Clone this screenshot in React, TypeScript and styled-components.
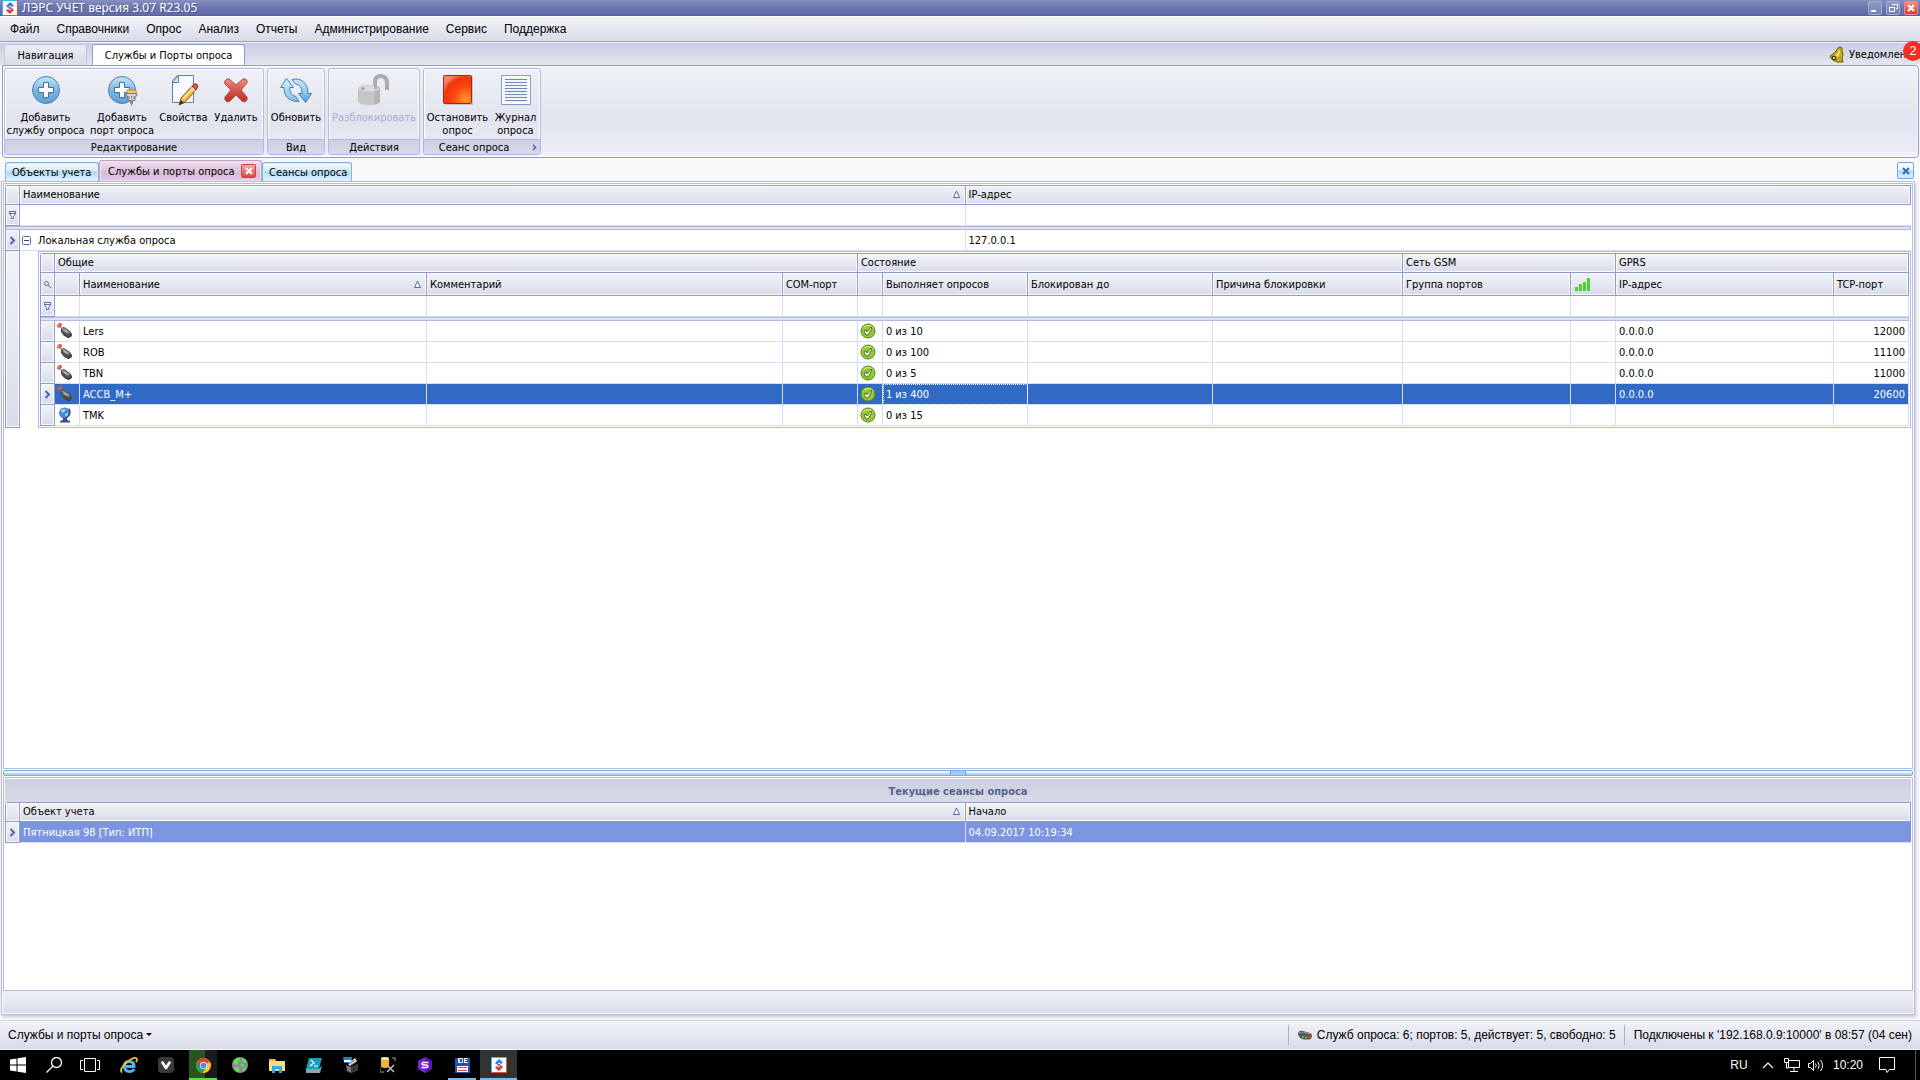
import React from 'react';
import styled, { createGlobalStyle, css } from 'styled-components';

const UI = `"DejaVu Sans Condensed", "Noto Sans", Tahoma, sans-serif`;
const SHELL = `"Liberation Sans", Arial, sans-serif`;
const CAPTION = `"Noto Sans", "Open Sans", "Segoe UI", sans-serif`;

const line = '#8f9ac8';
const softLine = '#b3bade';
const cellLine = '#d9daf5';
const barFill = 'linear-gradient(#f1f2f7, #e6e8f1 50%, #d8dbe9)';

const Global = createGlobalStyle`
  *, *::before, *::after { box-sizing: border-box; }
  body { margin: 0; background: #000; }
  button, input { font: inherit; color: inherit; border: 0; padding: 0; margin: 0; background: none; border-radius: 0; outline: none; }
  svg { display: block; flex: none; }
`;

const Page = styled.div`
  min-height: 100vh;
  display: flex;
  flex-direction: column;
  background: #f8f8fb;
  font: 11px/13px ${UI};
  color: #000;
  white-space: nowrap;
  overflow: hidden;
`;

/* ---------- window chrome ---------- */

const TitleBar = styled.header`
  height: 16px;
  flex: none;
  display: flex;
  align-items: center;
  gap: 4px;
  padding: 0 2px 0 2px;
  background: linear-gradient(#8690bf, #6a75ad 50%, #636ea8 90%, #4e5a97);
  color: #fff;
  font: 12px/14px ${CAPTION};
`;

const TitleText = styled.h1`
  flex: 1;
  margin: 0;
  font: inherit;
  text-shadow: 1px 1px 0 #4d5890;
`;

const WindowButton = styled.button<{ $close?: boolean }>`
  width: 14px;
  height: 14px;
  display: grid;
  place-items: center;
  border: 1px solid ${p => (p.$close ? '#e88' : '#a3abd3')};
  border-radius: 2px;
  background: ${p => (p.$close ? 'linear-gradient(#f08a86, #dd3a36)' : 'linear-gradient(#929ac5, #7480b5)')};
`;

const MenuBar = styled.nav`
  height: 26px;
  flex: none;
  display: flex;
  align-items: center;
  gap: 17px;
  padding: 0 10px;
  border-top: 1px solid #fff;
  border-bottom: 1px solid ${line};
  background: ${barFill};
  font: 12px/16px ${SHELL};
`;

const MenuItem = styled.button`
  line-height: 16px;
`;

/* ---------- ribbon ---------- */

const RibbonTabs = styled.div`
  height: 23px;
  flex: none;
  display: flex;
  align-items: flex-end;
  gap: 5px;
  padding: 0 0 0 4px;
  background: linear-gradient(#c9cde0, #d9dce9 60%, #e3e5ef);
  border-top: 1px solid #f4f5fa;
`;

const RibbonTab = styled.button<{ $active?: boolean; $width: number }>`
  width: ${p => p.$width}px;
  height: 21px;
  border: 1px solid ${p => (p.$active ? line : '#c2c7de')};
  border-bottom: 0;
  border-radius: 3px 3px 0 0;
  background: ${p => (p.$active ? '#fff' : 'linear-gradient(#eceef5, #d9dce9)')};
`;

const Notice = styled.button`
  position: relative;
  height: 22px;
  width: 91px;
  margin-left: auto;
  display: flex;
  align-items: center;
  gap: 5px;
  overflow: visible;
`;

const Badge = styled.span`
  position: absolute;
  right: -3px;
  top: -2px;
  width: 20px;
  height: 20px;
  border-radius: 50%;
  background: #fb2d25;
  color: #fff;
  font: 12px/20px ${SHELL};
  text-align: center;
`;

const Ribbon = styled.section`
  height: 93px;
  flex: none;
  display: flex;
  gap: 3px;
  margin: 0 1px 0 2px;
  padding: 2px 1px;
  border: 1px solid ${line};
  border-radius: 0 4px 4px 4px;
  box-shadow: inset 0 0 0 1px #fff;
  background: linear-gradient(#f0f1f6, #e1e4ee 60%, #e9eaf4 90%, #f2f2fa);
`;

const Group = styled.section`
  display: flex;
  flex-direction: column;
  border: 1px solid ${softLine};
  border-radius: 3px;
  overflow: hidden;
  box-shadow: inset 0 0 0 1px #fff;
`;

const GroupBody = styled.div`
  flex: 1;
  display: flex;
`;

const GroupCaption = styled.h2<{ $arrow?: boolean }>`
  position: relative;
  height: 15px;
  margin: 0;
  padding-right: ${p => (p.$arrow ? 16 : 0)}px;
  border-top: 1px solid ${softLine};
  background: linear-gradient(#ccd0e2, #d6d9e8);
  font: 11px/15px ${UI};
  text-align: center;
`;

const CaptionArrow = styled.span`
  position: absolute;
  right: 3px;
  top: 4px;
`;

const Tool = styled.button<{ $width: number }>`
  width: ${p => p.$width}px;
  padding-top: 5px;
  display: flex;
  flex-direction: column;
  align-items: center;
  gap: 5px;
  line-height: 13px;
  white-space: pre;
  &:disabled { color: #a9aed6; }
`;

/* ---------- document area ---------- */

const DocTabs = styled.div`
  height: 23px;
  flex: none;
  display: flex;
  align-items: flex-end;
  padding: 0 6px 0 5px;
`;

const DocTab = styled.div<{ $active?: boolean; $width: number }>`
  width: ${p => p.$width}px;
  height: ${p => (p.$active ? 21 : 19)}px;
  display: flex;
  align-items: center;
  justify-content: space-between;
  padding: 0 5px 0 ${p => (p.$active ? 8 : 6)}px;
  border: 1px solid ${p => (p.$active ? '#c79fc4' : '#7fb2dc')};
  border-bottom: 0;
  border-radius: 3px 3px 0 0;
  box-shadow: inset 0 0 0 1px ${p => (p.$active ? '#f2e2f1' : '#d9eefb')};
  background: ${p => (p.$active ? 'linear-gradient(#f1e2f0, #d9bcd7 60%, #e2cbe2)' : 'linear-gradient(#fafdff, #cfe9fa 45%, #a9d6f3 50%, #e6f7ff)')};
`;

const CloseTab = styled.button`
  width: 15px;
  height: 14px;
  display: grid;
  place-items: center;
  border: 1px solid #d23c3c;
  border-radius: 2px;
  background: linear-gradient(#f4aaa6, #e2453f);
`;

const ClosePane = styled.button`
  width: 17px;
  height: 17px;
  margin: 0 0 2px auto;
  display: grid;
  place-items: center;
  border: 1px solid #6fa9d8;
  border-radius: 2px;
  background: linear-gradient(#f3faff 45%, #b5dbf5 50%, #d7f1ff);
`;

const Frame = styled.main`
  flex: 1;
  display: flex;
  flex-direction: column;
  margin: 0 5px 5px 1px;
  border: 1px solid ${softLine};
  padding: 1px;
  background: #fff;
  box-shadow: 1px 2px 3px #c9c9cf;
`;

const Pane = styled.section<{ $grow?: boolean; $height?: number }>`
  flex: ${p => (p.$grow ? '1 1 auto' : 'none')};
  ${p => p.$height && css`height: ${p.$height}px;`}
  padding: 1px;
  border: 1px solid ${softLine};
`;

const Splitter = styled.div`
  height: 6px;
  flex: none;
  margin: 1px 0;
  display: flex;
  justify-content: center;
  border: 1px solid #6fb1e2;
  border-radius: 2px;
  background: linear-gradient(#e9f6fe 40%, #b4dcf5 50%, #a8d4f1);
`;

const Grip = styled.span`
  width: 16px;
  border: solid #5da3dc;
  border-width: 0 1px;
  background: #9fcdf0;
`;

const PaneTitle = styled.h2`
  height: 23px;
  margin: 0;
  background: linear-gradient(#cbcfdf, #d7dae7);
  color: #57648f;
  font: bold 11px/25px ${UI};
  text-align: center;
`;

const PaneFooter = styled.div`
  height: 22px;
  flex: none;
  background: ${barFill};
`;

/* ---------- grids ---------- */

const Grid = styled.table`
  width: 100%;
  table-layout: fixed;
  border-collapse: separate;
  border-spacing: 0;
  border: solid ${line};
  border-width: 1px 0 0 1px;
  border-radius: 3px 0 0 0;
`;

const Head = styled.th<{ $tall?: boolean }>`
  height: ${p => (p.$tall ? 23 : 19)}px;
  padding: 0 4px ${p => (p.$tall ? 0 : 2)}px 3px;
  border: solid ${line};
  border-width: 0 1px 1px 0;
  box-shadow: inset 0 0 0 1px #fafaff;
  background: ${barFill};
  font-weight: normal;
  text-align: left;
`;

const HeadLabel = styled.span`
  display: flex;
  align-items: center;
  justify-content: space-between;
`;

const Mark = styled.th<{ $h?: number }>`
  height: ${p => p.$h ?? 21}px;
  padding: 0;
  border: solid ${line};
  border-width: 0 1px 1px 0;
  box-shadow: inset 0 0 0 1px #fafaff;
  background: ${barFill};
  & > svg { margin: 0 auto; }
`;

const Cell = styled.td<{ $right?: boolean; $plain?: boolean; $focus?: boolean; $icon?: boolean }>`
  height: 21px;
  padding: 0 3px 0 ${p => (p.$icon ? 2 : 3)}px;
  border: solid ${cellLine};
  border-width: 0 ${p => (p.$plain ? 0 : 1)}px 1px 0;
  text-align: ${p => (p.$right ? 'right' : 'left')};
  ${p => p.$focus && css`outline: 1px dotted #fff; outline-offset: -1px;`}
`;

const FilterInput = styled.input`
  display: block;
  width: 100%;
  height: 18px;
`;

const Gap = styled.td`
  height: 4px;
  padding: 0;
  border: 1px solid ${softLine};
  border-left: 0;
  background: #dfe2f0;
`;

const Row = styled.tr<{ $tone?: 'strong' | 'soft' }>`
  ${p => p.$tone && css`
    & > td { color: #fff; background: ${p.$tone === 'strong' ? '#316ac5' : '#7b96df'}; }
  `}
`;

const DetailCell = styled.td`
  padding: 0 0 0 18px;
`;

const Detail = styled.div`
  padding: 1px;
  border: 1px solid ${softLine};
`;

const Expand = styled.div`
  display: flex;
  align-items: center;
  gap: 7px;
`;

/* ---------- bottom bars ---------- */

const StatusBar = styled.footer`
  height: 30px;
  flex: none;
  display: flex;
  align-items: center;
  padding: 0 8px 0 8px;
  border-top: 1px solid #d0d4e6;
  border-bottom: 1px solid #f6f7fb;
  background: ${barFill};
  font: 12px/16px ${SHELL};
`;

const StatusMenu = styled.button`
  margin-right: auto;
  display: flex;
  align-items: center;
  gap: 3px;
`;

const StatusItem = styled.span`
  height: 20px;
  display: flex;
  align-items: center;
  gap: 5px;
  padding: 0 0 0 9px;
  margin-left: 8px;
  border-left: 1px solid #a9b0d6;
`;

const TaskBar = styled.div`
  height: 30px;
  flex: none;
  display: flex;
  background: #000;
  color: #fff;
  font: 12px/16px ${SHELL};
`;

const Shell = styled.div`
  display: flex;
  margin-right: 2px;
`;

const TaskButton = styled.button<{ $system?: boolean; $bg?: string; $under?: string; $narrow?: boolean }>`
  width: ${p => (p.$system ? 36 : p.$narrow ? 28 : 37)}px;
  margin: ${p => (p.$narrow ? '0 4px 0 5px' : '0')};
  height: 30px;
  display: grid;
  place-items: center;
  background: ${p => p.$bg ?? 'none'};
  box-shadow: ${p => (p.$under ? `inset 0 -2px ${p.$under}` : 'none')};
`;

const Tray = styled.div`
  margin-left: auto;
  display: flex;
  align-items: center;
  padding-right: 4px;
`;

const TrayButton = styled.button<{ $width: number }>`
  width: ${p => p.$width}px;
  height: 30px;
  display: grid;
  place-items: center;
`;

const DesktopEdge = styled.button`
  width: 1px;
  height: 30px;
  margin-left: 11px;
  background: #555;
`;

/* ---------- drawings ---------- */

const AppLogo = () => (
  <svg width="16" height="16" viewBox="0 0 16 16">
    <path d="M0 0h16v16H0z" fill="#e2504a" />
    <path d="M0 0h15v1H1v14H0z" fill="#3fb4e6" />
    <path d="M1 1h14v14H1z" fill="#fff" />
    <path d="M8 2l4 3.500-2 1.500-2-1.500L6.500 7 9 8.500 8 9.500 4 6z" fill="#2f84d2" />
    <path d="M8 14l-4-3.500L6 9l2 1.500L9.500 9 7 7.500 8 6.500 12 10z" fill="#e5352d" />
  </svg>
);

const AddIcon = ({ plug }: { plug?: boolean }) => (
  <svg width="32" height="32" viewBox="0 0 32 32">
    <defs>
      <linearGradient id="blueBall" x1="0" y1="0" x2="0" y2="1">
        <stop offset="0" stopColor="#c4e6f6" />
        <stop offset=".5" stopColor="#7fb6dc" />
        <stop offset="1" stopColor="#5e9fd4" />
      </linearGradient>
    </defs>
    <circle cx="16" cy="16" r="13.5" fill="url(#blueBall)" stroke="#4a82b8" />
    <path d="M13.500 8.500h5v5h5v5h-5v5h-5v-5h-5v-5h5z" fill="#fff" stroke="#3f6fa6" strokeLinejoin="round" />
    {plug && (
      <g>
        <path d="M21 16h9v4h-9z" fill="#f7c96a" stroke="#c98a2a" />
        <path d="M20 19.500h11v2l-2 1v4h-7v-4l-2-1z" fill="#d6d6d2" stroke="#777" />
        <path d="M24 26h3v3l-1.500 3-1.500-3z" fill="#8b8b8b" />
        <path d="M23 22v3M25.500 22v3M28 22v3" stroke="#888" />
      </g>
    )}
  </svg>
);

const EditIcon = () => (
  <svg width="32" height="32" viewBox="0 0 32 32">
    <path d="M9.500 1.500h16v27h-21v-22z" fill="#f8fafe" stroke="#5f7fb0" />
    <path d="M4.500 8.500h6v-7z" fill="#dbe6f5" stroke="#5f7fb0" />
    <path d="M13 24l11-12 4 4-11 12-6 3z" fill="#f2b43c" stroke="#8a5a1c" />
    <path d="M15 25L26 13.500" stroke="#fbdc8c" strokeWidth="2" />
    <path d="M24 12l2-2q3-1 4 2l-2 4z" fill="#dc5548" stroke="#9a3127" />
    <path d="M23 13l4 4" stroke="#ddd" strokeWidth="1.500" />
    <path d="M11 31l2-5 3 3z" fill="#333" />
  </svg>
);

const DeleteIcon = () => (
  <svg width="32" height="32" viewBox="0 0 32 32">
    <defs>
      <linearGradient id="redCross" x1="0" y1="0" x2="0" y2="1">
        <stop offset="0" stopColor="#ec8f86" />
        <stop offset=".5" stopColor="#d8574d" />
        <stop offset="1" stopColor="#b92c22" />
      </linearGradient>
    </defs>
    <path d="M5 7q2-3 4-2l7 6 7-6q3-1 4 2 1 1-1 3l-5 6 6 7q1 2-1 4-2 2-4 0l-6-6-6 6q-2 2-4 0-2-2-1-4l6-7-6-6q-1-1 0-3z" fill="url(#redCross)" stroke="#b5473f" />
  </svg>
);

const RefreshIcon = () => (
  <svg width="32" height="32" viewBox="0 0 32 32">
    <defs>
      <linearGradient id="arcUp" x1="0" y1="0" x2="0" y2="1">
        <stop offset="0" stopColor="#d3f0fb" />
        <stop offset="1" stopColor="#86bfe6" />
      </linearGradient>
      <linearGradient id="arcDown" x1="0" y1="0" x2="0" y2="1">
        <stop offset="0" stopColor="#c6e8f6" />
        <stop offset=".6" stopColor="#8fc6e8" />
        <stop offset="1" stopColor="#4f97d2" />
      </linearGradient>
    </defs>
    <g stroke="#4180b8" strokeLinejoin="round">
      <path d="M6.500 4.500L.5 13.500h3.500q0 8 5 11.500 4 3 10 2.500l-3-5q-6-1-6.500-9h4z" fill="url(#arcUp)" />
      <path d="M25.500 28.500l6-9h-3.500q0-8-5-12-4-3.500-11-2l3.500 4.500q7 1 6.500 9.500h-3.500z" fill="url(#arcDown)" />
    </g>
  </svg>
);

const UnlockIcon = () => (
  <svg width="32" height="32" viewBox="0 0 32 32">
    <path d="M17 13V8q0-6 6-6 6 0 6 8v6" fill="none" stroke="#adadad" strokeWidth="4" />
    <path d="M0 15q0-4 11-4t11 4v12q0 4-11 4T0 27z" fill="#c6c6c6" />
    <path d="M17 12q5 1 5 3v12q0 3-6 3.500z" fill="#b5b5b5" />
    <ellipse cx="11" cy="14.500" rx="10" ry="3" fill="#dcdcdc" />
    <circle cx="5" cy="14.500" r="1.500" fill="#999" />
    <path d="M16 11l3 0 0 4-3 0z" fill="#adadad" />
  </svg>
);

const StopIcon = () => (
  <svg width="32" height="32" viewBox="0 0 32 32">
    <defs>
      <radialGradient id="stopFill" cx=".8" cy=".85" r=".95">
        <stop offset="0" stopColor="#ff9c2e" />
        <stop offset=".45" stopColor="#fb4a10" />
        <stop offset=".8" stopColor="#f03408" />
        <stop offset="1" stopColor="#f5866a" />
      </radialGradient>
    </defs>
    <path d="M3 3h28v28H3z" fill="#c3c3cb" />
    <rect x="1.500" y="1.500" width="28" height="28" rx="1" fill="url(#stopFill)" stroke="#b02010" />
  </svg>
);

const JournalIcon = () => (
  <svg width="32" height="32" viewBox="0 0 32 32">
    <path d="M1.500 1.500h29v29h-29z" fill="#fff" stroke="#8a9cc4" />
    <path d="M3 3h26v26H3z" fill="#f0f4fb" />
    <path d="M5 5.500h22M5 8.500h22M5 11.500h22M5 14.500h22M5 17.500h22M5 20.500h22M5 23.500h22M5 26.500h22" stroke="#7387b6" />
  </svg>
);

const BellIcon = () => (
  <svg width="15" height="17" viewBox="0 0 15 17">
    <path d="M9 2q2-2 4 0l0 3q2 4 0 7l1 4-6 0Q1 13 1 10q6-3 8-8z" fill="#c9a91c" stroke="#6e5a10" />
    <path d="M10 4q-1 5-6 6l3 2q4-2 4-8z" fill="#f5e680" />
    <circle cx="5" cy="12" r="2.500" fill="#4c3d0a" />
    <circle cx="5" cy="12" r="1" fill="#fff" />
  </svg>
);

const Cross = ({ color, size = 8 }: { color: string; size?: number }) => (
  <svg width={size} height={size} viewBox="0 0 8 8">
    <path d="M1 1l6 6M7 1L1 7" stroke={color} strokeWidth="2" />
  </svg>
);

const SortIcon = () => (
  <svg width="9" height="9" viewBox="0 0 9 9">
    <path d="M4.500 1L1.500 7.500h6z" fill="#fff" stroke="#5a68a8" />
  </svg>
);

const FilterIcon = () => (
  <svg width="9" height="10" viewBox="0 0 9 10">
    <path d="M1.500 1.500h6v2l-2 3v2h-2v-2l-2-3zM1.500 3.500h6" fill="#fff" stroke="#5a68a8" />
  </svg>
);

const LensIcon = () => (
  <svg width="9" height="9" viewBox="0 0 9 9">
    <circle cx="3.500" cy="3.500" r="2" fill="none" stroke="#5a68a8" />
    <path d="M5 5l3 3" stroke="#5a68a8" />
  </svg>
);

const Pointer = () => (
  <svg width="7" height="9" viewBox="0 0 7 9">
    <path d="M1.500 1l3.500 3.500L1.500 8" fill="none" stroke="#5363a8" strokeWidth="2" />
  </svg>
);

const MinusBox = () => (
  <svg width="9" height="9" viewBox="0 0 9 9">
    <rect x=".5" y=".5" width="8" height="8" rx="1" fill="#fff" stroke="#5a68a8" />
    <path d="M2 4.500h5" stroke="#333f78" />
  </svg>
);

const ModemIcon = () => (
  <svg width="16" height="16" viewBox="0 0 16 16">
    <path d="M4 5l3-1 6 4 2 3v2l-3 2-5-2-3-4z" fill="#4e4f4a" />
    <path d="M5 5l2 0 6 4-2 2-5-3z" fill="#92928e" />
    <path d="M7 7l3 2" stroke="#c5c5c2" />
    <path d="M7 12l5 2 2-2v1l-3 2z" fill="#2e2e2e" />
    <path d="M5 6L3 3" stroke="#666" />
    <path d="M.5 4q0-3.500 4-3.500M2 5q0-3 3-3" fill="none" stroke="#e4513a" strokeWidth="1.300" />
  </svg>
);

const GlobeIcon = () => (
  <svg width="16" height="16" viewBox="0 0 16 16">
    <circle cx="7.500" cy="6" r="5.500" fill="#4388d4" />
    <path d="M4 3l3-1 2 1-2 2-2 1zM8 7l3-1 0 2-2 2z" fill="#b4d5f3" />
    <path d="M12 1.500q3 5.500-3 9.500" fill="none" stroke="#34508c" strokeWidth="1.500" />
    <path d="M6 11h4v2l3 1v1.500H3V14l3-1z" fill="#3d4a7c" />
  </svg>
);

const OkIcon = () => (
  <svg width="16" height="16" viewBox="0 0 16 16">
    <circle cx="8" cy="8" r="7" fill="#94c92f" stroke="#4f8a1a" />
    <path d="M2 6q6-6 12 0-2-4-6-4T2 6z" fill="#d0ee8c" />
    <path d="M4 8l2-1 1 2 4-5 1 1-4 7H6z" fill="#fff" stroke="#4a6d1c" />
  </svg>
);

const SignalIcon = () => (
  <svg width="16" height="13" viewBox="0 0 16 13">
    <path d="M1 9h3v4H1zM5 6h3v7H5zM9 4h3v9H9zM13 0h3v13h-3z" fill="#45d52f" />
  </svg>
);

const RouterIcon = () => (
  <svg width="14" height="10" viewBox="0 0 14 10">
    <path d="M0 3q1-3 5-2l7 2q2 1 2 3l-1 3q-5 1-9 0Q0 7 0 3z" fill="#56585a" />
    <path d="M1 3q4-2 11 1" stroke="#9a9c9e" fill="none" />
    <path d="M4 7h2M7 7.500h2" stroke="#4fd83a" strokeWidth="1.500" />
    <path d="M10 7h3" stroke="#e03a2a" strokeWidth="2" />
  </svg>
);

const WindowsIcon = () => (
  <svg width="16" height="16" viewBox="0 0 16 16">
    <path d="M0 2.500L6.500 1.500v6H0zM7.500 1.300L16 0v7.500H7.500zM0 8.500h6.500v6L0 13.600zM7.500 8.500H16V16l-8.500-1.300z" fill="#fff" />
  </svg>
);

const SearchIcon = () => (
  <svg width="16" height="16" viewBox="0 0 16 16">
    <circle cx="10.500" cy="5.500" r="5" fill="none" stroke="#fff" strokeWidth="1.300" />
    <path d="M7 9L.5 15.500" stroke="#fff" strokeWidth="1.300" />
  </svg>
);

const TaskViewIcon = () => (
  <svg width="20" height="16" viewBox="0 0 20 16">
    <path d="M4.500 1.500h11v13h-11zM3 3.500H.5v9H3M17 3.500h2.500v9H17" fill="none" stroke="#fff" />
  </svg>
);

const ExplorerE = () => (
  <svg width="18" height="17" viewBox="0 0 18 17">
    <path d="M4 9.500h10q0-5-5-5T4.500 9.500q0 5 5 5 3.500 0 4.500-2.500" fill="none" stroke="#4cb4f0" strokeWidth="3" />
    <path d="M2 15.500q-3-3 4-9.500Q13 0 16 1q2 1 0 4" fill="none" stroke="#f6c02c" strokeWidth="1.800" />
  </svg>
);

const VivaldiIcon = () => (
  <svg width="16" height="16" viewBox="0 0 16 16">
    <rect width="16" height="16" rx="4" fill="#3b3b3d" />
    <path d="M4.500 5.500l3.500 5.500 3.500-5.500" fill="none" stroke="#fff" strokeWidth="2.600" strokeLinecap="round" strokeLinejoin="round" />
  </svg>
);

const ChromeIcon = () => (
  <svg width="15" height="15" viewBox="0 0 16 16">
    <circle cx="8" cy="8" r="8" fill="#f9c92e" />
    <path d="M8 8L1 4a8 8 0 0 1 14 0z" fill="#db4437" />
    <path d="M8 8L1 4a8 8 0 0 0 6 12l4-6z" fill="#2f9e58" />
    <path d="M8 4h7a8 8 0 0 0-13.500-.5L5 9z" fill="#db4437" />
    <circle cx="8" cy="8" r="3.700" fill="#fff" />
    <circle cx="8" cy="8" r="3" fill="#4a87ee" />
  </svg>
);

const EarthIcon = () => (
  <svg width="16" height="16" viewBox="0 0 16 16">
    <circle cx="8" cy="8" r="8" fill="#8b8b8f" />
    <path d="M2 3l3-2 3 0 0 2-2 2-1 3-3-1-1-1zM10 1l4 2 1 3-3 0-2-2zM9 6l3 2-1 3-2-2zM2 10l4 0 2 3-1 2-3-1zM11 12l3-2 0 2-3 3z" fill="#62dc5c" />
  </svg>
);

const FolderIcon = () => (
  <svg width="16" height="15" viewBox="0 0 16 15">
    <path d="M0 1h6l1 2h9v10H0z" fill="#f9dc82" />
    <path d="M0 1h6l1 2H0z" fill="#e8b73e" />
    <path d="M3 15V8h10v7h-3v-4H6v4z" fill="#35a9e8" />
  </svg>
);

const ConsoleIcon = () => (
  <svg width="16" height="15" viewBox="0 0 16 15">
    <path d="M3 0h13l-3 11H0z" fill="#16a1bd" />
    <path d="M0 11h13l3-4-2 8H0z" fill="#8ea3aa" />
    <path d="M5 2l3 3-4 3M8 8h4" fill="none" stroke="#fff" strokeWidth="1.200" />
  </svg>
);

const BoxIcon = () => (
  <svg width="16" height="16" viewBox="0 0 16 16">
    <path d="M0 0h9v6H1z" fill="#1d80c6" />
    <path d="M1 3h7v2H1z" fill="#fff" />
    <path d="M5 7l7-6 2 3-7 5z" fill="#e9e9e9" />
    <path d="M6 7l6-4" stroke="#d23b3b" />
    <path d="M8 8l5-3" stroke="#3ba03b" />
    <path d="M3 8l5 2 7-3v6l-7 3-4-2z" fill="#77787c" />
    <path d="M8 10l7-3v6l-7 3z" fill="#36373a" />
  </svg>
);

const DatabaseIcon = () => (
  <svg width="16" height="16" viewBox="0 0 16 16">
    <path d="M1 1q4-2 8 0v9q-4 2-8 0z" fill="#efb53a" />
    <ellipse cx="5" cy="1.500" rx="4" ry="1.500" fill="#fbe4a0" />
    <path d="M12 1h3v3M0 11v4h4" fill="none" stroke="#3f8a4d" strokeWidth="1.500" />
    <path d="M7 15l7-7M8 9l6 6" stroke="#b9bcc0" strokeWidth="1.600" />
  </svg>
);

const HexIcon = () => (
  <svg width="16" height="16" viewBox="0 0 16 16">
    <path d="M8 0l7 4v8l-7 4-7-4V4z" fill="#7a24d6" />
    <path d="M8 0l7 4v8l-7 4z" fill="#5c15b4" />
    <path d="M11.500 5.500H6q-2 1.200 0 2.500h4q2 1.200 0 2.500H4.500" fill="none" stroke="#fff" strokeWidth="1.400" />
  </svg>
);

const FloppyIcon = () => (
  <svg width="15" height="15" viewBox="0 0 15 15">
    <path d="M0 0h15v15H0z" fill="#2450b4" />
    <path d="M3 0h5v5H3z" fill="#dfe5f2" />
    <path d="M5 1h2v3H5z" fill="#2450b4" />
    <path d="M9.500 0v5M9 .5h4M9 2.500h3M9 4.500h4" stroke="#fff" />
    <path d="M2 8h11v6H2z" fill="#fff" />
    <path d="M3 9.500h9M3 12.500h9" stroke="#e04545" />
  </svg>
);

/* ---------- data ---------- */

const menus = ['Файл', 'Справочники', 'Опрос', 'Анализ', 'Отчеты', 'Администрирование', 'Сервис', 'Поддержка'];

const ports = [
  { name: 'Lers', polls: '0 из 10', ip: '0.0.0.0', tcp: '12000', icon: <ModemIcon /> },
  { name: 'ROB', polls: '0 из 100', ip: '0.0.0.0', tcp: '11100', icon: <ModemIcon /> },
  { name: 'TBN', polls: '0 из 5', ip: '0.0.0.0', tcp: '11000', icon: <ModemIcon /> },
  { name: 'ACCB_M+', polls: '1 из 400', ip: '0.0.0.0', tcp: '20600', icon: <ModemIcon />, selected: true },
  { name: 'TMK', polls: '0 из 15', ip: '', tcp: '', icon: <GlobeIcon /> },
];

const filterNames = ['Значок', 'Наименование', 'Комментарий', 'COM-порт', 'Статус', 'Выполняет опросов', 'Блокирован до', 'Причина блокировки', 'Группа портов', 'Сигнал', 'IP-адрес', 'TCP-порт'];

const portColumns = [14, 25, 347, undefined, 75, 25, 145, 185, 190, 168, 45, 218, 75];

const PortsGrid = () => (
  <Grid>
    <colgroup>
      {portColumns.map((w, i) => <col key={i} width={w} />)}
    </colgroup>
    <thead>
      <tr>
        <Mark $h={19} />
        <Head colSpan={4}>Общие</Head>
        <Head colSpan={4}>Состояние</Head>
        <Head colSpan={2}>Сеть GSM</Head>
        <Head colSpan={2}>GPRS</Head>
      </tr>
      <tr>
        <Mark $h={23}><LensIcon /></Mark>
        <Head $tall />
        <Head $tall><HeadLabel>Наименование<SortIcon /></HeadLabel></Head>
        <Head $tall>Комментарий</Head>
        <Head $tall>COM-порт</Head>
        <Head $tall />
        <Head $tall>Выполняет опросов</Head>
        <Head $tall>Блокирован до</Head>
        <Head $tall>Причина блокировки</Head>
        <Head $tall>Группа портов</Head>
        <Head $tall><SignalIcon /></Head>
        <Head $tall>IP-адрес</Head>
        <Head $tall>TCP-порт</Head>
      </tr>
    </thead>
    <tbody>
      <tr>
        <Mark><FilterIcon /></Mark>
        {filterNames.map(n => <Cell key={n}><FilterInput aria-label={`Фильтр: ${n}`} /></Cell>)}
      </tr>
      <tr><Gap colSpan={13} /></tr>
      {ports.map(p => (
        <Row key={p.name} $tone={p.selected ? 'strong' : undefined}>
          <Mark>{p.selected && <Pointer />}</Mark>
          <Cell $icon>{p.icon}</Cell>
          <Cell>{p.name}</Cell>
          <Cell />
          <Cell />
          <Cell $icon><OkIcon /></Cell>
          <Cell $focus={p.selected}>{p.polls}</Cell>
          <Cell />
          <Cell />
          <Cell />
          <Cell />
          <Cell>{p.ip}</Cell>
          <Cell $right>{p.tcp}</Cell>
        </Row>
      ))}
    </tbody>
  </Grid>
);

const ServicesGrid = () => (
  <Grid>
    <colgroup><col width={14} /><col /><col /></colgroup>
    <thead>
      <tr>
        <Mark $h={19} />
        <Head><HeadLabel>Наименование<SortIcon /></HeadLabel></Head>
        <Head>IP-адрес</Head>
      </tr>
    </thead>
    <tbody>
      <tr>
        <Mark><FilterIcon /></Mark>
        <Cell><FilterInput aria-label="Фильтр служб: Наименование" /></Cell>
        <Cell $plain><FilterInput aria-label="Фильтр служб: IP-адрес" /></Cell>
      </tr>
      <tr><Gap colSpan={3} /></tr>
      <tr>
        <Mark><Pointer /></Mark>
        <Cell $icon><Expand><button aria-label="Свернуть"><MinusBox /></button>Локальная служба опроса</Expand></Cell>
        <Cell $plain>127.0.0.1</Cell>
      </tr>
      <tr>
        <Mark />
        <DetailCell colSpan={2}><Detail><PortsGrid /></Detail></DetailCell>
      </tr>
    </tbody>
  </Grid>
);

const SessionsGrid = () => (
  <Grid>
    <colgroup><col width={14} /><col /><col /></colgroup>
    <thead>
      <tr>
        <Mark $h={19} />
        <Head><HeadLabel>Объект учета<SortIcon /></HeadLabel></Head>
        <Head>Начало</Head>
      </tr>
    </thead>
    <tbody>
      <Row $tone="soft">
        <Mark><Pointer /></Mark>
        <Cell>Пятницкая 98 [Тип: ИТП]</Cell>
        <Cell $plain>04.09.2017 10:19:34</Cell>
      </Row>
    </tbody>
  </Grid>
);

export default function App() {
  return (
    <>
      <Global />
      <Page>
        <TitleBar>
          <AppLogo />
          <TitleText>ЛЭРС УЧЕТ версия 3.07 R23.05</TitleText>
          <WindowButton aria-label="Свернуть окно">
            <svg width="10" height="10" viewBox="0 0 10 10"><path d="M1 7h5v2H1z" fill="#fff" /></svg>
          </WindowButton>
          <WindowButton aria-label="Восстановить окно">
            <svg width="10" height="10" viewBox="0 0 10 10"><path d="M1.500 4.500h5v4h-5zM1 4.500h6M4 1.500h5.500v4H8" fill="none" stroke="#fff" /></svg>
          </WindowButton>
          <WindowButton $close aria-label="Закрыть окно"><Cross color="#fff" /></WindowButton>
        </TitleBar>

        <MenuBar>{menus.map(m => <MenuItem key={m}>{m}</MenuItem>)}</MenuBar>

        <RibbonTabs>
          <RibbonTab $width={83}>Навигация</RibbonTab>
          <RibbonTab $width={153} $active>Службы и Порты опроса</RibbonTab>
          <Notice aria-label="Уведомления"><BellIcon />Уведомлен<Badge>2</Badge></Notice>
        </RibbonTabs>

        <Ribbon>
          <Group>
            <GroupBody>
              <Tool $width={81}><AddIcon />{'Добавить\nслужбу опроса'}</Tool>
              <Tool $width={72}><AddIcon plug />{'Добавить\nпорт опроса'}</Tool>
              <Tool $width={51}><EditIcon />Свойства</Tool>
              <Tool $width={54}><DeleteIcon />Удалить</Tool>
            </GroupBody>
            <GroupCaption>Редактирование</GroupCaption>
          </Group>
          <Group>
            <GroupBody><Tool $width={56}><RefreshIcon />Обновить</Tool></GroupBody>
            <GroupCaption>Вид</GroupCaption>
          </Group>
          <Group>
            <GroupBody><Tool $width={90} disabled><UnlockIcon />Разблокировать</Tool></GroupBody>
            <GroupCaption>Действия</GroupCaption>
          </Group>
          <Group>
            <GroupBody>
              <Tool $width={67}><StopIcon />{'Остановить\nопрос'}</Tool>
              <Tool $width={49}><JournalIcon />{'Журнал\nопроса'}</Tool>
            </GroupBody>
            <GroupCaption $arrow>
              Сеанс опроса
              <CaptionArrow><svg width="5" height="7" viewBox="0 0 5 7"><path d="M1 1l2.500 2.500L1 6" fill="none" stroke="#5363a8" strokeWidth="1.500" /></svg></CaptionArrow>
            </GroupCaption>
          </Group>
        </Ribbon>

        <DocTabs>
          <DocTab $width={94}><button>Объекты учета</button></DocTab>
          <DocTab $width={163} $active>
            <button>Службы и порты опроса</button>
            <CloseTab aria-label="Закрыть вкладку"><Cross color="#fff" /></CloseTab>
          </DocTab>
          <DocTab $width={90}><button>Сеансы опроса</button></DocTab>
          <ClosePane aria-label="Закрыть панель"><Cross color="#2a6cb8" /></ClosePane>
        </DocTabs>

        <Frame>
          <Pane $grow><ServicesGrid /></Pane>
          <Splitter><Grip /></Splitter>
          <Pane $height={214}>
            <PaneTitle>Текущие сеансы опроса</PaneTitle>
            <SessionsGrid />
          </Pane>
          <PaneFooter />
        </Frame>

        <StatusBar>
          <StatusMenu>
            Службы и порты опроса
            <svg width="6" height="4" viewBox="0 0 6 4"><path d="M0 0h6L3 3z" /></svg>
          </StatusMenu>
          <StatusItem><RouterIcon />Служб опроса: 6; портов: 5, действует: 5, свободно: 5</StatusItem>
          <StatusItem>Подключены к '192.168.0.9:10000' в 08:57 (04 сен)</StatusItem>
        </StatusBar>

        <TaskBar>
          <Shell>
            <TaskButton $system aria-label="Пуск"><WindowsIcon /></TaskButton>
            <TaskButton $system aria-label="Поиск"><SearchIcon /></TaskButton>
            <TaskButton $system aria-label="Представление задач"><TaskViewIcon /></TaskButton>
          </Shell>
          <TaskButton aria-label="Internet Explorer"><ExplorerE /></TaskButton>
          <TaskButton aria-label="Vivaldi"><VivaldiIcon /></TaskButton>
          <TaskButton $narrow $bg="linear-gradient(90deg, #27551f 57%, #1b1b1b 57%)" $under="#5be33c" aria-label="Chrome"><ChromeIcon /></TaskButton>
          <TaskButton aria-label="Сеть"><EarthIcon /></TaskButton>
          <TaskButton aria-label="Проводник"><FolderIcon /></TaskButton>
          <TaskButton aria-label="PowerShell"><ConsoleIcon /></TaskButton>
          <TaskButton aria-label="Сервер"><BoxIcon /></TaskButton>
          <TaskButton aria-label="SQL"><DatabaseIcon /></TaskButton>
          <TaskButton aria-label="Студия"><HexIcon /></TaskButton>
          <TaskButton $narrow $under="#76b9ed" aria-label="Файловый менеджер"><FloppyIcon /></TaskButton>
          <TaskButton $bg="#333" $under="#76b9ed" aria-label="ЛЭРС УЧЕТ"><AppLogo /></TaskButton>
          <Tray>
            <TrayButton $width={40}>RU</TrayButton>
            <TrayButton $width={18} aria-label="Скрытые значки">
              <svg width="12" height="8" viewBox="0 0 12 8"><path d="M1 7l5-5 5 5" fill="none" stroke="#fff" strokeWidth="1.200" /></svg>
            </TrayButton>
            <TrayButton $width={29} aria-label="Сеть">
              <svg width="16" height="14" viewBox="0 0 16 14"><path d="M4.500 2.500h11v7h-11zM10 10v3M6 13.500h8M.5.500h4v4h-4zM2.500 5v5h2" fill="none" stroke="#fff" /></svg>
            </TrayButton>
            <TrayButton $width={20} aria-label="Громкость">
              <svg width="16" height="13" viewBox="0 0 16 13"><path d="M.5 4.500h2l3-3v10l-3-3h-2zM7.500 4.500q1.500 2 0 4M10 3q2.500 3.500 0 7M12.500 1q4 5.500 0 11" fill="none" stroke="#fff" /></svg>
            </TrayButton>
            <TrayButton $width={44}>10:20</TrayButton>
            <TrayButton $width={34} aria-label="Уведомления системы">
              <svg width="16" height="16" viewBox="0 0 16 16"><path d="M.5.500h15v12h-5L8 15.500 7 12.500H.5z" fill="none" stroke="#fff" /></svg>
            </TrayButton>
            <DesktopEdge aria-label="Показать рабочий стол" />
          </Tray>
        </TaskBar>
      </Page>
    </>
  );
}
